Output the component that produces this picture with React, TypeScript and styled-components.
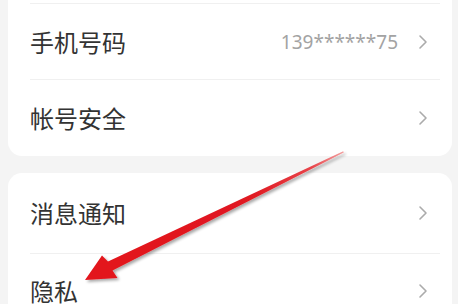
import React from "react";
import styled, { createGlobalStyle } from "styled-components";

const GlobalStyle = createGlobalStyle`
  html, body {
    margin: 0;
    padding: 0;
    background: #f4f4f4;
  }
  body {
    font-family: "Noto Sans CJK SC", "Noto Sans", sans-serif;
  }
`;

const Page = styled.div`
  position: relative;
  width: 458px;
  height: 304px;
  overflow: hidden;
  padding: 0 6px 0 8px;
  box-sizing: border-box;
  display: flex;
  flex-direction: column;
  gap: 17px;
`;

interface CardProps {
  cut?: boolean;
}

const Card = styled.div<CardProps>`
  background: #fff;
  border-radius: ${(p) => (p.cut ? "0 0 14px 14px" : "14px")};
  display: flex;
  flex-direction: column;
  flex-shrink: 0;
`;

const Divider = styled.div<{ top?: boolean }>`
  height: 1px;
  background: #f0f0f0;
  margin: ${(p) => (p.top ? "3px 12px 0 22px" : "0 12px 0 22px")};
`;

const Row = styled.div<{ h: number }>`
  height: ${(p) => p.h}px;
  display: flex;
  align-items: center;
  padding: 0 24px 0 22px;
`;

const Label = styled.span`
  flex: 1;
  font-size: 24px;
  color: #333;
  line-height: 1;
`;

const Value = styled.span`
  font-family: "Noto Sans", sans-serif;
  font-size: 19px;
  color: #a3a3a3;
  margin-right: 20px;
`;

const Chevron = () => (
  <svg width="10" height="16" viewBox="0 0 10 16">
    <path
      d="M2 2 L8 8 L2 14"
      fill="none"
      stroke="#ababab"
      strokeWidth="1.6"
      strokeLinecap="round"
      strokeLinejoin="round"
    />
  </svg>
);

const ArrowLayer = styled.svg`
  position: absolute;
  left: 0;
  top: 0;
  pointer-events: none;
`;

const Arrow = () => (
  <ArrowLayer width="458" height="304" viewBox="0 0 458 304">
    <defs>
      <linearGradient id="shaft" x1="343" y1="152" x2="85" y2="280" gradientUnits="userSpaceOnUse">
        <stop offset="0" stopColor="#f2a0a0" />
        <stop offset="0.12" stopColor="#e8444a" />
        <stop offset="0.35" stopColor="#e01a22" />
        <stop offset="1" stopColor="#e3131b" />
      </linearGradient>
      <filter id="soft" x="-10%" y="-10%" width="130%" height="140%">
        <feGaussianBlur in="SourceAlpha" stdDeviation="1.6" />
        <feOffset dx="1.5" dy="2" result="b" />
        <feComponentTransfer>
          <feFuncA type="linear" slope="0.35" />
        </feComponentTransfer>
        <feMerge>
          <feMergeNode />
          <feMergeNode in="SourceGraphic" />
        </feMerge>
      </filter>
    </defs>
    <path
      d="M343.2 151.2 L108 261.5 L102 255.5 L85 280 L117.5 278 L112.5 270.5 L343.8 152.6 Z"
      fill="url(#shaft)"
      filter="url(#soft)"
    />
  </ArrowLayer>
);

const App = () => {
  return (
    <>
      <GlobalStyle />
      <Page>
        <Card cut>
          <Divider top />
          <Row h={75}>
            <Label>手机号码</Label>
            <Value>139******75</Value>
            <Chevron />
          </Row>
          <Divider />
          <Row h={76}>
            <Label>帐号安全</Label>
            <Chevron />
          </Row>
        </Card>
        <Card>
          <Row h={80}>
            <Label>消息通知</Label>
            <Chevron />
          </Row>
          <Divider />
          <Row h={74}>
            <Label>隐私</Label>
            <Chevron />
          </Row>
        </Card>
        <Arrow />
      </Page>
    </>
  );
};

export default App;
